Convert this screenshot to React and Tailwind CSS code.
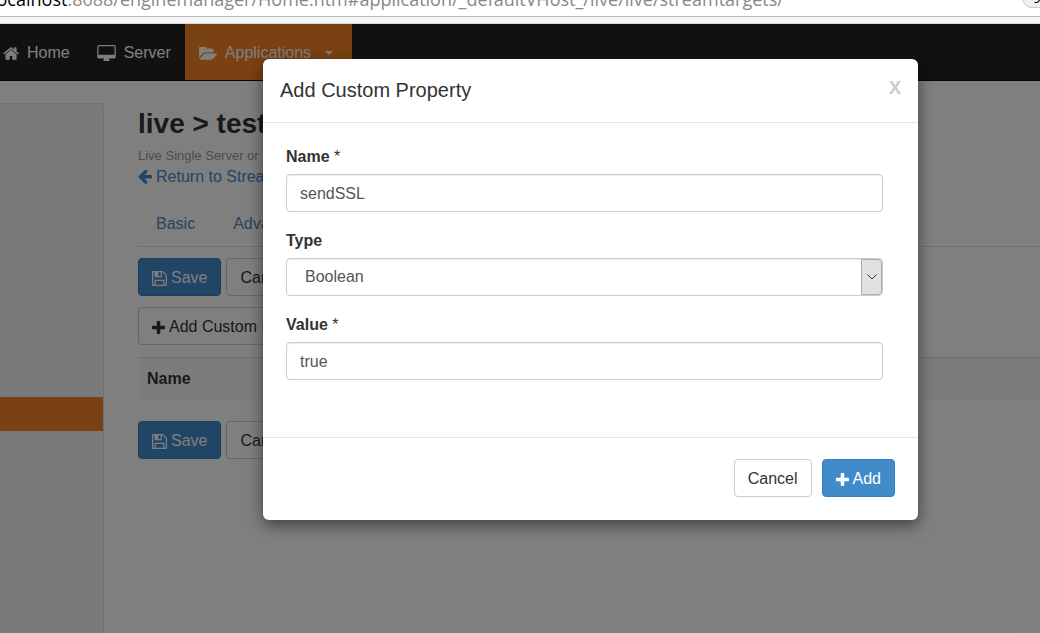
import { useState } from "react";

const ICONS = {
  home: {
    box: "64 253 1664 1283",
    d: "M1472 992v480q0 26-19 45t-45 19h-384v-384h-256v384h-384q-26 0-45-19t-19-45v-480q0-1 .5-3t.5-3l575-474 575 474q1 2 1 6zm223-69l-62 74q-8 9-21 11h-3q-13 0-21-7l-692-577-692 577q-12 8-24 7-13-2-21-11l-62-74q-8-10-7-23.5t11-21.5l719-599q32-26 76-26t76 26l244 204v-195q0-14 9-23t23-9h192q14 0 23 9t9 23v408l219 182q10 8 11 21.5t-7 23.5z",
  },
  desktop: {
    box: "-64 0 1920 1664",
    d: "M1728 992v-832q0-13-9.5-22.5t-22.5-9.5h-1600q-13 0-22.5 9.5t-9.5 22.5v832q0 13 9.5 22.5t22.5 9.5h1600q13 0 22.5-9.5t9.5-22.5zm128-832v1088q0 66-47 113t-113 47h-544q0 37 16 77.5t32 71 16 43.5q0 26-19 45t-45 19h-512q-26 0-45-19t-19-45q0-14 16-44t32-70 16-78h-544q-66 0-113-47t-47-113v-1088q0-66 47-113t113-47h1600q66 0 113 47t47 113z",
  },
  folder: {
    box: "-64 256 1880 1280",
    d: "M1815 952q0 31-31 66l-336 396q-43 51-120.5 86.5t-143.5 35.5h-1088q-34 0-60.5-13t-26.5-43q0-31 31-66l336-396q43-51 120.5-86.5t143.5-35.5h1088q34 0 60.5 13t26.5 43zm-343-344v160h-832q-94 0-197 47.5t-164 119.5l-337 396-5 6q0-4-.5-12.5t-.5-12.5v-960q0-92 66-158t158-66h320q92 0 158 66t66 158v32h544q92 0 158 66t66 158z",
  },
  arrow: {
    box: "128 210 1536 1536",
    d: "M1664 896v128q0 53-32.5 90.5t-84.5 37.5h-704l293 294q38 36 38 90t-38 90l-75 76q-37 37-90 37-52 0-91-37l-651-652q-37-37-37-90 0-52 37-91l651-650q38-38 91-38 52 0 90 38l75 74q38 38 38 91t-38 91l-293 293h704q52 0 84.5 37.5t32.5 90.5z",
  },
  save: {
    box: "128 128 1536 1536",
    d: "M512 1536h768v-384h-768v384zm896 0h128v-896q0-14-10-38.5t-20-34.5l-281-281q-10-10-34-20t-39-10v416q0 40-28 68t-68 28h-576q-40 0-68-28t-28-68v-416h-128v1280h128v-416q0-40 28-68t68-28h832q40 0 68 28t28 68v416zm-384-928v-320q0-13-9.5-22.5t-22.5-9.5h-192q-13 0-22.5 9.5t-9.5 22.5v320q0 13 9.5 22.5t22.5 9.5h192q13 0 22.5-9.5t9.5-22.5zm640 32v928q0 40-28 68t-68 28h-1344q-40 0-68-28t-28-68v-1344q0-40 28-68t68-28h928q40 0 88 20t76 48l280 280q28 28 48 76t20 88z",
  },
  plus: {
    box: "192 128 1408 1408",
    d: "M1600 736v192q0 40-28 68t-68 28h-416v416q0 40-28 68t-68 28h-192q-40 0-68-28t-28-68v-416h-416q-40 0-68-28t-28-68v-192q0-40 28-68t68-28h416v-416q0-40 28-68t68-28h192q40 0 68 28t28 68v416h416q40 0 68 28t28 68z",
  },
};

function Icon({ name, className }) {
  return (
    <svg viewBox={ICONS[name].box} fill="currentColor" aria-hidden="true" className={className}>
      <path d={ICONS[name].d} />
    </svg>
  );
}

function Button({ primary, children, ...rest }) {
  const tone = primary
    ? "border-[#357ebd] bg-[#428bca] text-white"
    : "border-[#ccc] bg-white text-[#333]";
  return (
    <button
      type="button"
      className={`flex items-center gap-1 rounded border px-[13px] pt-[7px] pb-[5px] leading-6 whitespace-nowrap ${tone}`}
      {...rest}
    >
      {children}
    </button>
  );
}

function AddressBar() {
  return (
    <header className="shrink-0">
      <div className="flex h-4 items-start justify-between overflow-hidden bg-white font-['Open_Sans',sans-serif]">
        <p className="-mt-[13px] -ml-2 text-lg leading-6 whitespace-nowrap text-[#888]">
          <span className="text-black">localhost</span>
          :8088/enginemanager/Home.htm#application/_defaultVHost_/live/live/streamtargets/
        </p>
        <button
          type="button"
          className="-mt-3 -mr-[30px] h-5 w-12 shrink-0 rounded-full border border-[#ccc] bg-[#f0f0f0] pl-2.5 text-left text-sm leading-[18px] text-black"
        >
          90%
        </button>
      </div>
      <div className="h-2 border-t border-b border-t-[#b8b8b8] border-b-[#d8d8d8] bg-[#f5f5f5]" />
    </header>
  );
}

function NavBar() {
  return (
    <nav className="flex h-[57px] border-b border-[#080808] bg-[#222] text-white">
      <a href="#home" className="flex items-center gap-2 pt-0.5 pr-[13px] pl-[3px]">
        <Icon name="home" className="h-[13px] w-4" />
        Home
      </a>
      <a href="#server" className="flex items-center gap-2 px-3.5 pt-0.5">
        <Icon name="desktop" className="h-4 w-[19px]" />
        Server
      </a>
      <a href="#applications" className="flex items-center gap-2 bg-[#f48426] pt-0.5 pr-[19px] pl-3.5">
        <Icon name="folder" className="h-[13px] w-[18px]" />
        Applications
        <span className="ml-1.5 border-x-4 border-t-4 border-x-transparent border-t-white" />
      </a>
    </nav>
  );
}

function FormActions() {
  return (
    <div className="flex gap-[5px]">
      <Button primary>
        <Icon name="save" className="size-[15px]" />
        Save
      </Button>
      <Button>Cancel</Button>
    </div>
  );
}

function Page() {
  return (
    <div className="flex flex-1 bg-white">
      <aside className="mt-[22px] w-[104px] shrink-0 rounded-tr border-t border-r border-[#e3e3e3] bg-[#f5f5f5] pt-[293px]">
        <div className="h-[34px] bg-[#f48426]" />
      </aside>
      <main className="min-w-0 flex-1 pt-[27px] pl-[34px]">
        <h1 className="text-[28px] leading-8 font-bold">live &gt; test</h1>
        <p className="mt-1.5 text-[13px] leading-5 text-[#999]">Live Single Server or Origin</p>
        <a href="#streamtargets" className="mt-px flex items-center gap-1 leading-5 text-[#428bca]">
          <Icon name="arrow" className="size-3.5" />
          Return to Stream Targets
        </a>
        <div className="mt-[15px] flex border-b border-[#ddd] text-[#428bca]">
          <a href="#basic" className="px-[18px] py-2.5 leading-6">Basic</a>
          <a href="#advanced" className="px-5 py-2.5 leading-6">Advanced</a>
        </div>
        <div className="mt-[11px] flex flex-col items-start gap-[11px]">
          <FormActions />
          <Button>
            <Icon name="plus" className="size-[13px]" />
            Add Custom Property
          </Button>
        </div>
        <table className="mt-3 w-full border-t border-[#ddd] bg-[#f9f9f9] text-left">
          <thead>
            <tr>
              <th className="px-[9px] py-2 leading-[26px]">Name</th>
            </tr>
          </thead>
        </table>
        <div className="mt-[21px]">
          <FormActions />
        </div>
      </main>
    </div>
  );
}

const CONTROL =
  "block h-[38px] w-full rounded border border-[#ccc] bg-white text-[#555] shadow-[inset_0_1px_1px_rgba(0,0,0,0.075)]";

function TextField({ id, label, value, onChange }) {
  return (
    <div>
      <label htmlFor={id} className="mb-[5px] block pt-px leading-6">
        <b>{label}</b> *
      </label>
      <input
        id={id}
        type="text"
        required
        value={value}
        onChange={(e) => onChange(e.target.value)}
        className={`${CONTROL} px-[13px] pt-0.5`}
      />
    </div>
  );
}

function PropertyDialog() {
  const [name, setName] = useState("sendSSL");
  const [type, setType] = useState("Boolean");
  const [value, setValue] = useState("true");
  return (
    <form
      role="dialog"
      aria-labelledby="dialog-title"
      className="flex-1 rounded-md bg-white shadow-[0_5px_15px_rgba(0,0,0,0.5)]"
    >
      <div className="flex items-start justify-between border-b border-[#e5e5e5] px-[17px] pt-4 pb-[17px]">
        <h2 id="dialog-title" className="text-xl leading-[30px]">Add Custom Property</h2>
        <button
          type="button"
          aria-label="Close"
          className="font-['Open_Sans',sans-serif] text-lg leading-6 font-bold text-[#ccc]"
        >
          X
        </button>
      </div>
      <div className="flex flex-col gap-4 pt-[21px] pr-[35px] pb-[57px] pl-[23px]">
        <TextField id="name" label="Name" value={name} onChange={setName} />
        <div>
          <label htmlFor="type" className="mb-[5px] block pt-px leading-6 font-bold">Type</label>
          <div className="relative">
            <select
              id="type"
              value={type}
              onChange={(e) => setType(e.target.value)}
              className={`${CONTROL} appearance-none pr-8 pl-[18px]`}
            >
              <option>Boolean</option>
            </select>
            <span className="pointer-events-none absolute inset-y-px right-px flex w-[21px] items-center justify-center rounded-r-sm border border-[#adadad] bg-[#e1e1e1]">
              <svg viewBox="0 0 10 6" fill="none" stroke="#333" className="h-1.5 w-2.5" aria-hidden="true">
                <path d="M.5 .5 5 5 9.5 .5" />
              </svg>
            </span>
          </div>
        </div>
        <TextField id="value" label="Value" value={value} onChange={setValue} />
      </div>
      <div className="flex justify-end gap-2.5 border-t border-[#e5e5e5] px-[23px] pt-[21px] pb-[23px]">
        <Button>Cancel</Button>
        <Button primary>
          <Icon name="plus" className="size-[13px]" />
          Add
        </Button>
      </div>
    </form>
  );
}

export default function App() {
  return (
    <div className="flex min-h-screen flex-col overflow-hidden font-['Liberation_Sans',Arial,sans-serif] text-base text-[#333]">
      <AddressBar />
      <div className="relative flex flex-1 flex-col">
        <NavBar />
        <Page />
        <div className="absolute inset-0 flex items-start bg-black/50 pt-[35px] pr-[122px] pl-[263px]">
          <PropertyDialog />
        </div>
      </div>
    </div>
  );
}
